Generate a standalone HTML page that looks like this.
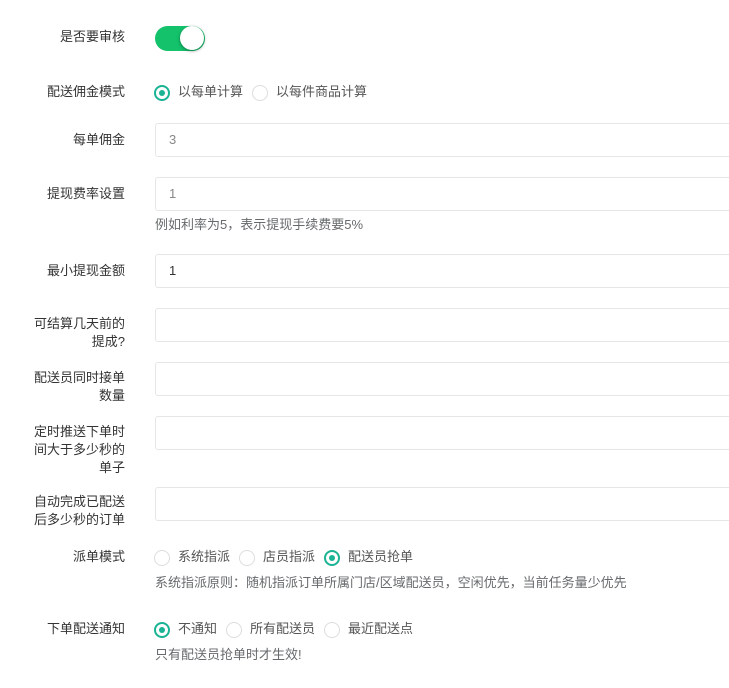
<!DOCTYPE html>
<html><head><meta charset="utf-8"><style>
body{margin:0;width:729px;height:688px;background:#fff;overflow:hidden;font-family:"Liberation Sans","Noto Sans CJK SC",sans-serif;font-size:13px;color:#333;position:relative}
.l{position:absolute;right:604px;text-align:right;line-height:18px;width:110px}
.in{position:absolute;left:155px;width:600px;height:32px;border:1px solid #e5e6e7;border-radius:3px;box-sizing:content-box;line-height:32px;padding-left:13px;color:#666}
.h{position:absolute;left:155px;color:#676a6c;line-height:18px;font-size:13px;white-space:nowrap}
.r{position:absolute;width:14px;height:14px;border:1px solid #ddd;border-radius:50%;background:#fff}
.r.on{border:2px solid #1ab394;width:12px;height:12px}
.r.on:after{content:"";position:absolute;left:3px;top:3px;width:6px;height:6px;border-radius:50%;background:#1ab394}
.t{position:absolute;line-height:18px;color:#555}
</style></head><body>
<div class="l" style="top:28px">是否要审核</div>
<div style="position:absolute;left:155px;top:26px;width:50px;height:25px;border-radius:13px;background:#13c26b"></div>
<div style="position:absolute;left:180px;top:26px;width:24px;height:24px;border-radius:50%;background:#fff;box-shadow:0 1px 3px rgba(0,0,0,.4)"></div>

<div class="l" style="top:83px">配送佣金模式</div>
<div class="r on" style="left:154px;top:85px"></div><div class="t" style="left:178px;top:83px">以每单计算</div>
<div class="r" style="left:252px;top:85px"></div><div class="t" style="left:276px;top:83px">以每件商品计算</div>

<div class="l" style="top:131px">每单佣金</div>
<div class="in" style="top:123px;color:#888">3</div>
<div class="l" style="top:185px">提现费率设置</div>
<div class="in" style="top:177px;color:#888">1</div>
<div class="h" style="top:216px">例如利率为5，表示提现手续费要5%</div>
<div class="l" style="top:262px">最小提现金额</div>
<div class="in" style="top:254px;color:#333">1</div>
<div class="l" style="top:315px">可结算几天前的<br>提成?</div>
<div class="in" style="top:308px"></div>
<div class="l" style="top:369px">配送员同时接单<br>数量</div>
<div class="in" style="top:362px"></div>
<div class="l" style="top:423px">定时推送下单时<br>间大于多少秒的<br>单子</div>
<div class="in" style="top:416px"></div>
<div class="l" style="top:493px">自动完成已配送<br>后多少秒的订单</div>
<div class="in" style="top:487px"></div>

<div class="l" style="top:548px">派单模式</div>
<div class="r" style="left:154px;top:550px"></div><div class="t" style="left:178px;top:548px">系统指派</div>
<div class="r" style="left:239px;top:550px"></div><div class="t" style="left:263px;top:548px">店员指派</div>
<div class="r on" style="left:324px;top:550px"></div><div class="t" style="left:348px;top:548px">配送员抢单</div>
<div class="h" style="top:574px">系统指派原则：随机指派订单所属门店/区域配送员，空闲优先，当前任务量少优先</div>

<div class="l" style="top:620px">下单配送通知</div>
<div class="r on" style="left:154px;top:622px"></div><div class="t" style="left:178px;top:620px">不通知</div>
<div class="r" style="left:226px;top:622px"></div><div class="t" style="left:250px;top:620px">所有配送员</div>
<div class="r" style="left:324px;top:622px"></div><div class="t" style="left:348px;top:620px">最近配送点</div>
<div class="h" style="top:646px">只有配送员抢单时才生效!</div>
</body></html>
